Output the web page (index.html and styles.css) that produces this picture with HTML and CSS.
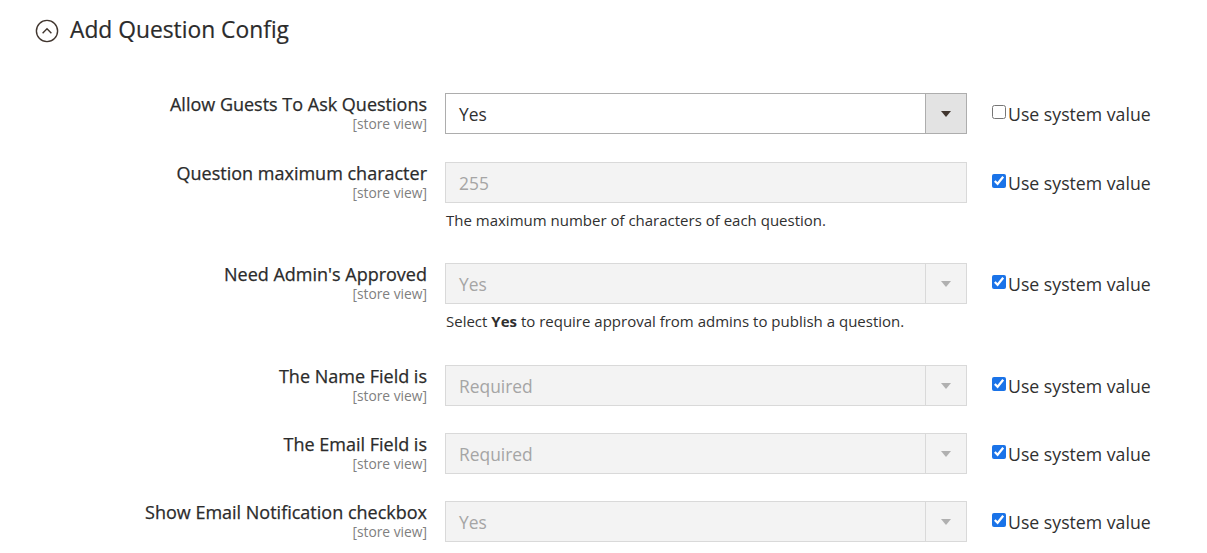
FILE: index.html
```html
<!DOCTYPE html>
<html>
<head>
<meta charset="utf-8">
<link rel="stylesheet" href="styles.css">
</head>
<body>
<div class="section">
  <div class="section-title">
    <svg class="toggle-icon" width="24" height="24" viewBox="0 0 24 24">
      <circle cx="12" cy="12" r="10.6" fill="none" stroke="#41362f" stroke-width="1.4"/>
      <path d="M7.6 14.2 L12 9.8 L16.4 14.2" fill="none" stroke="#41362f" stroke-width="1.4"/>
    </svg>
    <span>Add Question Config</span>
  </div>

  <div class="form">
    <div class="row row-first">
      <div class="label"><span class="label-text">Allow Guests To Ask Questions</span><span class="scope">[store view]</span></div>
      <div class="control">
        <div class="select"><span class="value">Yes</span><span class="arrow"></span></div>
      </div>
      <label class="inherit"><input type="checkbox">Use system value</label>
    </div>

    <div class="row">
      <div class="label"><span class="label-text">Question maximum character</span><span class="scope">[store view]</span></div>
      <div class="control">
        <div class="input disabled"><span class="value">255</span></div>
        <p class="note">The maximum number of characters of each question.</p>
      </div>
      <label class="inherit"><input type="checkbox" checked>Use system value</label>
    </div>

    <div class="row">
      <div class="label"><span class="label-text">Need Admin's Approved</span><span class="scope">[store view]</span></div>
      <div class="control">
        <div class="select disabled"><span class="value">Yes</span><span class="arrow"></span></div>
        <p class="note note-tall">Select <b>Yes</b> to require approval from admins to publish a question.</p>
      </div>
      <label class="inherit"><input type="checkbox" checked>Use system value</label>
    </div>

    <div class="row">
      <div class="label"><span class="label-text">The Name Field is</span><span class="scope">[store view]</span></div>
      <div class="control">
        <div class="select disabled"><span class="value">Required</span><span class="arrow"></span></div>
      </div>
      <label class="inherit"><input type="checkbox" checked>Use system value</label>
    </div>

    <div class="row">
      <div class="label"><span class="label-text">The Email Field is</span><span class="scope">[store view]</span></div>
      <div class="control">
        <div class="select disabled"><span class="value">Required</span><span class="arrow"></span></div>
      </div>
      <label class="inherit"><input type="checkbox" checked>Use system value</label>
    </div>

    <div class="row">
      <div class="label"><span class="label-text">Show Email Notification checkbox</span><span class="scope">[store view]</span></div>
      <div class="control">
        <div class="select disabled"><span class="value">Yes</span><span class="arrow"></span></div>
      </div>
      <label class="inherit"><input type="checkbox" checked>Use system value</label>
    </div>
  </div>
</div>
</body>
</html>
```

FILE: styles.css
```css
html, body {
  margin: 0;
  padding: 0;
  background: #fff;
}
body {
  font-family: "Open Sans", "Liberation Sans", sans-serif;
  color: #303030;
}
.section {
  padding: 15px 0 0 0;
}
.section-title {
  display: flex;
  align-items: center;
  gap: 11px;
  padding-left: 35px;
  height: 28px;
  font-size: 22.8px;
  color: #2b2b2b;
  -webkit-text-stroke: 0.2px #2b2b2b;
}
.toggle-icon {
  display: block;
  margin-top: 3px;
}
.form {
  padding-top: 50px;
}
.row {
  display: grid;
  grid-template-columns: 427px 522px auto;
  column-gap: 18px;
  margin-bottom: 27px;
  align-items: start;
}
.row-first {
  margin-bottom: 28px;
}
.label {
  display: flex;
  flex-direction: column;
  align-items: flex-end;
  padding-top: 1px;
}
.label-text {
  font-size: 18px;
  line-height: 20px;
  color: #2b2b2b;
  -webkit-text-stroke: 0.25px #2b2b2b;
}
.scope {
  font-size: 13.8px;
  line-height: 19px;
  color: #808080;
}
.control {
  min-width: 0;
}
.select, .input {
  box-sizing: border-box;
  height: 41px;
  border: 1px solid #adadad;
  background: #fff;
  display: flex;
  align-items: center;
  font-size: 17.4px;
  color: #303030;
}
.value {
  flex: 1;
  padding-left: 13px;
}
.arrow {
  width: 41px;
  height: 100%;
  border-left: 1px solid #adadad;
  background: #e3e3e3;
  box-sizing: border-box;
  position: relative;
}
.arrow::after {
  content: "";
  position: absolute;
  left: 50%;
  top: 50%;
  margin-left: -5px;
  margin-top: -3px;
  border-left: 5px solid transparent;
  border-right: 5px solid transparent;
  border-top: 6px solid #41362f;
}
.disabled {
  background: #f3f3f3;
  border-color: #d9d9d9;
  color: #a5a5a5;
}
.disabled .arrow {
  background: #f3f3f3;
  border-left-color: #d9d9d9;
}
.disabled .arrow::after {
  border-top-color: #b0b0b0;
}
.note {
  margin: 7px 0 6px 1px;
  font-size: 15px;
  line-height: 20px;
  color: #303030;
}
.note-tall {
  margin-bottom: 7px;
}
.note b {
  font-weight: 700;
}
.inherit {
  display: flex;
  align-items: center;
  height: 41px;
  padding-left: 7px;
  font-size: 17.7px;
  color: #303030;
}
.inherit input {
  width: 14px;
  height: 14px;
  margin: 0 2px 4px 0;
  accent-color: #1a73e8;
}
```
